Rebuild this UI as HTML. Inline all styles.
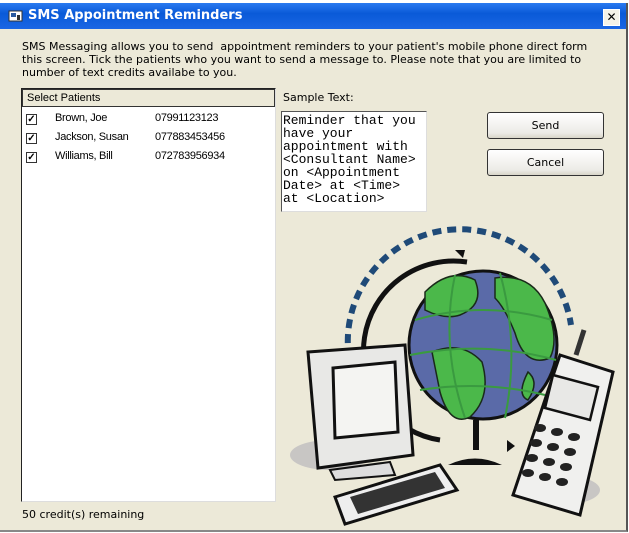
<!DOCTYPE html>
<html><head><style>
body{margin:0;width:629px;height:533px;background:#fff;overflow:hidden;font-family:"Liberation Sans",sans-serif;}
.win{position:absolute;left:0;top:3px;width:626px;height:527px;background:#ece9d8;border-right:2px solid #555;border-bottom:2px solid #888;}
.title{position:absolute;left:0;top:0;width:626px;height:26px;background:linear-gradient(#2a7af0,#0a5ad8 40%,#1a66e4);color:#fff;font-weight:bold;font-size:13px;font-family:"DejaVu Sans",sans-serif;}
.title span{position:absolute;left:28px;top:5px;}
.close{position:absolute;left:603px;top:6px;width:15px;height:15px;background:#f4f2e8;border:1px solid #fff;font-size:12px;font-weight:bold;color:#000;text-align:center;line-height:15px;}
.t{position:absolute;font-size:11px;color:#000;font-family:"DejaVu Sans",sans-serif;}
.list{position:absolute;left:21px;top:85px;width:253px;height:412px;background:#fff;border-left:1px solid #222;border-top:1px solid #222;border-right:1px solid #ddd;border-bottom:1px solid #ddd;}
.hdr{position:absolute;left:0;top:0;width:251px;height:16px;background:#ece9d8;border:1px solid #333;font-size:11px;}
.cb{position:absolute;left:4px;width:9px;height:9px;border:1px solid #333;background:#fff;font-size:10px;line-height:9px;text-align:center;font-weight:bold;}
.row{position:absolute;font-size:11px;letter-spacing:-0.3px;}
.ta{position:absolute;left:281px;top:108px;width:146px;height:101px;background:#fff;border-left:1px solid #555;border-top:1px solid #555;border-right:1px solid #ddd;border-bottom:1px solid #ddd;font-family:"Liberation Mono",monospace;font-size:13px;line-height:13px;white-space:pre;padding:2px 0 0 1px;box-sizing:border-box;}
.btn{position:absolute;left:487px;width:115px;height:25px;border:1px solid #333;border-radius:3px;background:linear-gradient(#fff,#ecebe6 80%,#d8d5c8);font-size:11px;text-align:center;line-height:25px;font-family:"DejaVu Sans",sans-serif;}
</style></head><body>
<div class="win">
<div class="title"><svg style="position:absolute;left:8px;top:6px" width="16" height="14"><rect x="1" y="2" width="13" height="10" fill="#fff" stroke="#333"/><rect x="3" y="4" width="5" height="4" fill="#2a5aa0"/><rect x="9" y="6" width="3" height="5" fill="#333"/></svg><span>SMS Appointment Reminders</span><div class="close">✕</div></div>
<div class="t" style="left:22px;top:37px;line-height:13px;">SMS Messaging allows you to send&nbsp; appointment reminders to your patient's mobile phone direct form<br>this screen. Tick the patients who you want to send a message to. Please note that you are limited to<br>number of text credits availabe to you.</div>
<div class="list">
<div class="hdr"><span style="position:absolute;left:4px;top:2px">Select Patients</span></div>
<div class="cb" style="top:25px">✓</div><div class="row" style="left:33px;top:23px">Brown, Joe</div><div class="row" style="left:133px;top:23px">07991123123</div>
<div class="cb" style="top:44px">✓</div><div class="row" style="left:33px;top:42px">Jackson, Susan</div><div class="row" style="left:133px;top:42px">077883453456</div>
<div class="cb" style="top:63px">✓</div><div class="row" style="left:33px;top:61px">Williams, Bill</div><div class="row" style="left:133px;top:61px">072783956934</div>
</div>
<div class="t" style="left:283px;top:88px">Sample Text:</div>
<div class="ta">Reminder that you
have your
appointment with
&lt;Consultant Name&gt;
on &lt;Appointment
Date&gt; at &lt;Time&gt;
at &lt;Location&gt;</div>
<div class="btn" style="top:109px">Send</div>
<div class="btn" style="top:146px">Cancel</div>
<div class="t" style="left:22px;top:505px">50 credit(s) remaining</div>
</div>
<svg style="position:absolute;left:0;top:0" width="629" height="533">
<path d="M349 358 A112 112 0 0 1 571 325" fill="none" stroke="#1f4a78" stroke-width="6" stroke-dasharray="9 6"/>
<ellipse cx="330" cy="455" rx="40" ry="15" fill="#c8c6c4"/>
<ellipse cx="560" cy="490" rx="40" ry="15" fill="#c8c6c4"/>
<path d="M467 262 A85 85 0 0 0 440 440" fill="none" stroke="#111" stroke-width="5"/>
<polygon points="455,250 465,250 463,258" fill="#111"/>
<circle cx="483" cy="345" r="74" fill="#5a6aa8" stroke="#111" stroke-width="3"/>
<path d="M425 292 q25-25 50-12 q10 25 -15 35 q-15 5 -35 -5z M495 278 q35-5 50 25 q15 35 5 55 q-25 10 -35 -25 q-10-25 -20-35z M432 352 q30-12 50 10 q10 35 -12 55 q-20 10 -30 -25z M528 372 q12 10 0 28 q-12 -5 0 -28z" fill="#4bb84a" stroke="#1a2a1a" stroke-width="1.5"/>
<path d="M415 320 Q483 300 552 320 M410 355 Q483 340 556 360 M420 390 Q483 380 545 395 M455 275 Q440 345 465 418 M500 273 Q520 345 505 418" fill="none" stroke="#3a9a40" stroke-width="2"/>
<rect x="473" y="420" width="6" height="30" fill="#111"/>
<path d="M448 465 Q475 452 502 465z" fill="#111"/>
<polygon points="507,440 515,446 507,452" fill="#111"/>
<path d="M308 352 L405 345 L413 455 L318 468z" fill="#e8e8e6" stroke="#111" stroke-width="3"/>
<path d="M333 368 L395 362 L398 432 L335 438z" fill="#f4f4f2" stroke="#111" stroke-width="3"/>
<path d="M330 470 L390 462 L395 475 L335 480z" fill="#ddd" stroke="#111" stroke-width="2"/>
<path d="M335 497 L440 465 L457 490 L345 524z" fill="#eee" stroke="#111" stroke-width="3"/>
<path d="M350 497 L435 472 L445 488 L358 514z" fill="#333"/>
<line x1="576" y1="355" x2="584" y2="330" stroke="#333" stroke-width="5"/>
<path d="M560 355 L613 372 L580 515 L513 495z" fill="#f0f0ee" stroke="#111" stroke-width="3"/>
<path d="M553 375 L598 387 L590 420 L545 408z" fill="#e8e8e6" stroke="#111" stroke-width="2.5"/>
<g fill="#222"><ellipse cx="540" cy="428" rx="6" ry="4"/><ellipse cx="557" cy="432" rx="6" ry="4"/><ellipse cx="574" cy="437" rx="6" ry="4"/><ellipse cx="536" cy="443" rx="6" ry="4"/><ellipse cx="553" cy="447" rx="6" ry="4"/><ellipse cx="570" cy="452" rx="6" ry="4"/><ellipse cx="532" cy="458" rx="6" ry="4"/><ellipse cx="549" cy="462" rx="6" ry="4"/><ellipse cx="566" cy="467" rx="6" ry="4"/><ellipse cx="528" cy="473" rx="6" ry="4"/><ellipse cx="545" cy="477" rx="6" ry="4"/><ellipse cx="562" cy="482" rx="6" ry="4"/></g>
</svg>
</body></html>
